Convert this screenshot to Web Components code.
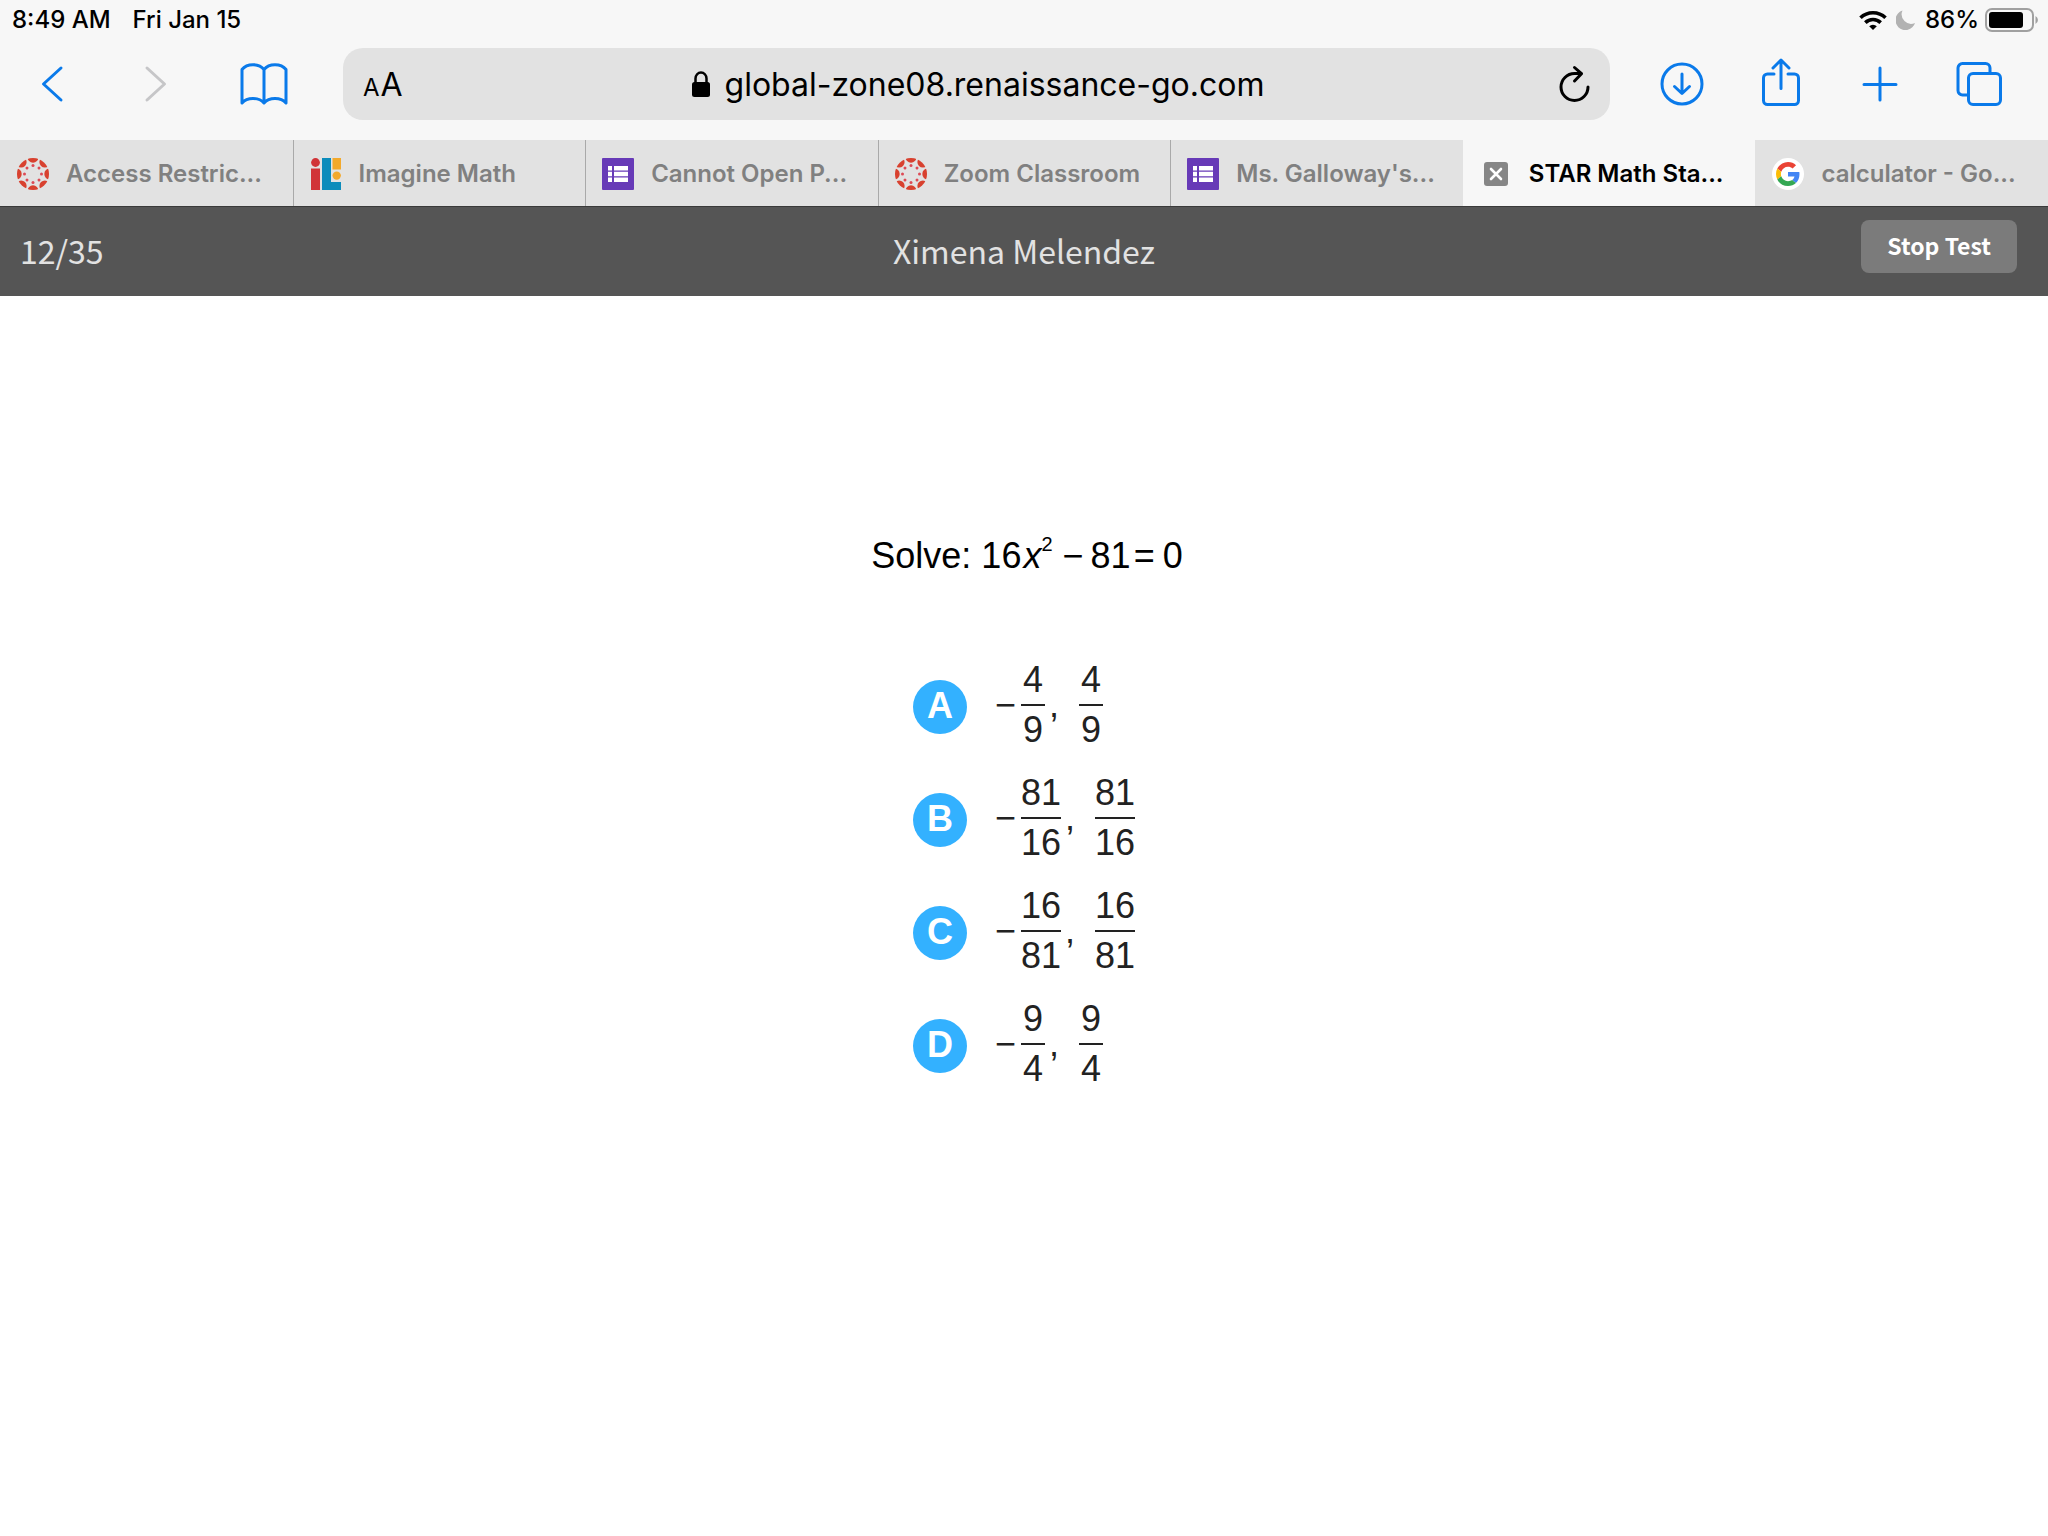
<!DOCTYPE html>
<html lang="en">
<head>
<meta charset="utf-8">
<meta name="viewport" content="width=device-width, initial-scale=1">
<title>STAR Math</title>
<style>
  body {
    margin: 0;
    background: #fff;
    font-family: Inter, "Liberation Sans", sans-serif;
  }
</style>
</head>
<body>
<star-app></star-app>

<script>
const icons = {
  back: `<svg width="24" height="40" viewBox="0 0 24 40" fill="none" stroke="currentColor" stroke-width="3" stroke-linecap="round" stroke-linejoin="round"><path d="M21 4 L3.500 20 L21 36"/></svg>`,
  forward: `<svg width="24" height="40" viewBox="0 0 24 40" fill="none" stroke="currentColor" stroke-width="3" stroke-linecap="round" stroke-linejoin="round"><path d="M3 4 L20.500 20 L3 36"/></svg>`,
  book: `<svg width="48" height="44" viewBox="0 0 48 44" fill="none" stroke="currentColor" stroke-width="3" stroke-linejoin="round"><path d="M24 7.500 C19 1 7 1 2 7.500 V41 C7 35 19 35 24 41 C29 35 41 35 46 41 V7.500 C41 1 29 1 24 7.500 V41"/></svg>`,
  lock: `<svg width="18" height="26" viewBox="0 0 18 26"><rect y="11" width="18" height="15" rx="2.500"/><path d="M3.500 12 V7.500 a5.500 6 0 0 1 11 0 V12" fill="none" stroke="currentColor" stroke-width="2.500"/></svg>`,
  reload: `<svg width="32" height="38" viewBox="0 0 32 38" fill="none" stroke="currentColor" stroke-width="3" stroke-linecap="round" stroke-linejoin="round"><path d="M29 22 A13.500 13.500 0 1 1 15.500 8.500 H22"/><path d="M15.500 2.500 L22.500 8.700 L15.500 16"/></svg>`,
  download: `<svg width="44" height="44" viewBox="0 0 44 44" fill="none" stroke="currentColor" stroke-width="3" stroke-linecap="round" stroke-linejoin="round"><circle cx="22" cy="22" r="20"/><path d="M22 12 V31 M14.500 24.500 L22 31.500 L29.500 24.500"/></svg>`,
  share: `<svg width="40" height="52" viewBox="0 0 40 52" fill="none" stroke="currentColor" stroke-width="3" stroke-linecap="round" stroke-linejoin="round"><path d="M13 16 H6.500 a4 4 0 0 0 -4 4 V42.500 a4 4 0 0 0 4 4 H33.500 a4 4 0 0 0 4 -4 V20 a4 4 0 0 0 -4 -4 H27"/><path d="M20 30.500 V3 M12 10 L20 2 L28 10"/></svg>`,
  plus: `<svg width="36" height="36" viewBox="0 0 36 36" fill="none" stroke="currentColor" stroke-width="3" stroke-linecap="round"><path d="M18 2 V34 M2 18.500 H34"/></svg>`,
  tabs: `<svg width="46" height="44" viewBox="0 0 46 44" fill="none" stroke="currentColor" stroke-width="3" stroke-linejoin="round"><rect x="12.500" y="11.500" width="32" height="31" rx="4.500"/><path d="M12.500 33 H6.500 a4.500 4.500 0 0 1 -4.500 -4.500 V6 a4.500 4.500 0 0 1 4.500 -4.500 H29.500 a4.500 4.500 0 0 1 4.500 4.500 V11"/></svg>`,
  wifi: `<svg width="28" height="20" viewBox="0 0 28 20" fill="none" stroke="currentColor" stroke-width="3.600"><path d="M1.500 7.800 A18 18 0 0 1 26.500 7.800"/><path d="M6.300 12.600 A11 11 0 0 1 21.700 12.600"/><path d="M14 20 L10.200 16.200 A5.400 5.400 0 0 1 17.800 16.200 Z" fill="currentColor" stroke="none"/></svg>`,
  moon: `<svg width="20" height="20" viewBox="0 0 20 20" fill="#b2b2b2"><path d="M6.500 0.500 A10 10 0 1 0 19 13 A9.500 9.500 0 0 1 6.500 0.500 Z"/></svg>`,
  battery: `<svg width="54" height="24" viewBox="0 0 54 24"><rect x="1" y="1" width="47" height="22" rx="6" fill="none" stroke="#a0a0a0" stroke-width="2"/><rect x="4" y="4" width="34" height="16" rx="3"/><path d="M50.500 8 a4.500 4.500 0 0 1 0 8 Z" fill="#a0a0a0"/></svg>`,
  canvas: `<svg width="32" height="32" viewBox="0 0 32 32"><defs><clipPath id="disc"><circle cx="16" cy="16" r="16"/></clipPath></defs><g clip-path="url(#disc)" fill="#d8412f">${
    [0, 45, 90, 135, 180, 225, 270, 315].map(a =>
      `<g transform="rotate(${a} 16 16)"><circle cx="16" cy="-0.800" r="5.500"/><circle cx="16" cy="7.500" r="1.500" fill="#dd4a55"/></g>`).join('')
  }</g></svg>`,
  imagine: `<svg width="32" height="32" viewBox="0 0 32 32"><circle cx="5.500" cy="4.500" r="4.400" fill="#d13438"/><path d="M1 10.500 H10 V32 H1 Z" fill="#d13438"/><path d="M12 0 H21 V24 H31 V32 H12 Z" fill="#0c8cbb"/><path d="M22.500 0 H31 V11.500 H22.500 Z" fill="#f3a92b"/><circle cx="26.700" cy="17.600" r="4.200" fill="#f3a92b"/></svg>`,
  forms: `<svg width="32" height="32" viewBox="0 0 32 32"><rect width="32" height="32" rx="1" fill="#673ab7"/><path d="M6 8h4v4.500H6z M12 8h14v4.500H12z M6 13.800h4v4.400H6z M12 13.800h14v4.400H12z M6 19.500h4V24H6z M12 19.500h14V24H12z" fill="#fff"/></svg>`,
  google: `<svg width="32" height="32" viewBox="0 0 32 32"><circle cx="16" cy="16" r="16" fill="#fff"/><g transform="translate(4 4) scale(0.500)"><path fill="#ea4335" d="M24 9.500c3.540 0 6.710 1.220 9.210 3.600l6.850-6.850C35.900 2.380 30.470 0 24 0 14.620 0 6.510 5.380 2.560 13.220l7.980 6.190C12.430 13.720 17.740 9.500 24 9.500z"/><path fill="#4285f4" d="M46.980 24.550c0-1.570-.15-3.090-.38-4.550H24v9.020h12.940c-.58 2.960-2.260 5.480-4.780 7.180l7.730 6c4.510-4.180 7.090-10.360 7.090-17.650z"/><path fill="#fbbc05" d="M10.530 28.590c-.48-1.450-.76-2.990-.76-4.590s.27-3.140.76-4.590l-7.980-6.190C.92 16.460 0 20.120 0 24c0 3.880.92 7.540 2.560 10.780l7.970-6.190z"/><path fill="#34a853" d="M24 48c6.480 0 11.930-2.130 15.890-5.810l-7.730-6c-2.150 1.450-4.920 2.300-8.160 2.300-6.260 0-11.570-4.220-13.470-9.910l-7.980 6.190C6.510 42.620 14.620 48 24 48z"/></g></svg>`,
  close: `<svg width="24" height="24" viewBox="0 0 24 24"><rect width="24" height="24" rx="3" fill="#868686"/><path d="M7 7 L17 17 M17 7 L7 17" stroke="#fff" stroke-width="2.600" stroke-linecap="round"/></svg>`
}

class IconGlyph extends HTMLElement {
  constructor () {
    super()
    this.attachShadow({ mode: 'open' })
  }

  connectedCallback () {
    this.shadowRoot.innerHTML = `
      <style>
        :host { display: inline-flex; }
        svg { display: block; }
      </style>
      ${icons[this.getAttribute('name')]}`
  }
}
customElements.define('icon-glyph', IconGlyph)

class StatusBar extends HTMLElement {
  constructor () {
    super()
    this.attachShadow({ mode: 'open' })
    this.shadowRoot.innerHTML = `
      <style>
        :host {
          align-items: center;
          display: flex;
          font-size: 24px;
          font-weight: 500;
          height: 40px;
          justify-content: space-between;
          line-height: 28px;
          padding: 0 9px 0 12px;
        }
        div {
          align-items: center;
          display: flex;
        }
        .clock { gap: 22px; }
        .state { gap: 9px; }
        .power { gap: 6px; }
      </style>
      <div class="clock"><slot name="time"></slot><slot name="date"></slot></div>
      <div class="state">
        <icon-glyph name="wifi"></icon-glyph>
        <icon-glyph name="moon"></icon-glyph>
        <div class="power">
          <slot name="battery"></slot>
          <icon-glyph name="battery"></icon-glyph>
        </div>
      </div>`
  }
}
customElements.define('status-bar', StatusBar)

class ToolButton extends HTMLElement {
  constructor () {
    super()
    this.attachShadow({ mode: 'open' })
  }

  connectedCallback () {
    const disabled = this.hasAttribute('disabled') ? 'disabled' : ''
    this.shadowRoot.innerHTML = `
      <style>
        :host { display: block; }
        button {
          align-items: center;
          background: none;
          border: none;
          color: #0a7aea;
          cursor: pointer;
          display: flex;
          height: 64px;
          justify-content: center;
          padding: 0;
          width: 64px;
        }
        button:disabled {
          color: #c6c6c8;
          cursor: default;
        }
      </style>
      <button type="button" aria-label="${this.getAttribute('label')}" ${disabled}>
        <icon-glyph name="${this.getAttribute('icon')}"></icon-glyph>
      </button>`
  }
}
customElements.define('tool-button', ToolButton)

class AddressBar extends HTMLElement {
  constructor () {
    super()
    this.attachShadow({ mode: 'open' })
  }

  connectedCallback () {
    this.shadowRoot.innerHTML = `
      <style>
        :host {
          align-items: center;
          background: #e2e2e2;
          border-radius: 20px;
          box-sizing: border-box;
          display: grid;
          grid-template-columns: 1fr auto 1fr;
          height: 72px;
          padding: 0 19px 0 20px;
        }
        button {
          align-items: baseline;
          background: none;
          border: none;
          color: #000;
          cursor: pointer;
          display: flex;
          font: inherit;
          padding: 0;
        }
        .size {
          font-size: 32px;
          gap: 1px;
          justify-self: start;
        }
        .size small { font-size: 24px; }
        .reload { justify-self: end; }
        .site {
          align-items: center;
          display: flex;
          gap: 15px;
          padding-left: 2px;
        }
        input {
          background: none;
          border: none;
          color: #000;
          field-sizing: content;
          font-family: inherit;
          font-size: 32px;
          line-height: 40px;
          outline: none;
          padding: 2px 0 0;
        }
      </style>
      <button type="button" class="size" aria-label="Page settings"><small>A</small><span>A</span></button>
      <label class="site">
        <icon-glyph name="lock"></icon-glyph>
        <input type="text" aria-label="Address" value="${this.getAttribute('url')}">
      </label>
      <button type="button" class="reload" aria-label="Reload"><icon-glyph name="reload"></icon-glyph></button>`
  }
}
customElements.define('address-bar', AddressBar)

class BrowserToolbar extends HTMLElement {
  constructor () {
    super()
    this.attachShadow({ mode: 'open' })
    this.shadowRoot.innerHTML = `
      <style>
        :host {
          align-items: center;
          display: flex;
          gap: 40px;
          padding: 8px 37px 20px 20px;
        }
        div { display: flex; }
        .left {
          gap: 44px;
          padding-right: 7px;
        }
        .history { gap: 40px; }
        .right { gap: 35px; }
        address-bar { flex: 1; }
      </style>
      <div class="left">
        <div class="history">
          <tool-button icon="back" label="Back"></tool-button>
          <tool-button icon="forward" label="Forward" disabled></tool-button>
        </div>
        <tool-button icon="book" label="Bookmarks"></tool-button>
      </div>
      <address-bar url="global-zone08.renaissance-go.com"></address-bar>
      <div class="right">
        <tool-button icon="download" label="Downloads"></tool-button>
        <tool-button icon="share" label="Share"></tool-button>
        <tool-button icon="plus" label="New tab"></tool-button>
        <tool-button icon="tabs" label="Show tabs"></tool-button>
      </div>`
  }
}
customElements.define('browser-toolbar', BrowserToolbar)

class BrowserTab extends HTMLElement {
  constructor () {
    super()
    this.attachShadow({ mode: 'open' })
  }

  connectedCallback () {
    this.shadowRoot.innerHTML = `
      <style>
        :host {
          background: #e2e2e2;
          border-left: 1px solid #a9a9a9;
          box-sizing: border-box;
          color: #808080;
          display: block;
          min-width: 0;
        }
        :host([plain]) { border-left-color: #e2e2e2; }
        :host([active]) {
          background: #f7f7f7;
          border-left-color: #f7f7f7;
          color: #000;
        }
        a {
          align-items: center;
          color: inherit;
          display: flex;
          font-size: 24px;
          font-weight: 600;
          gap: 17px;
          height: 64px;
          line-height: 28px;
          padding: 2px 0 0 16px;
          text-decoration: none;
          white-space: nowrap;
        }
        icon-glyph {
          flex: none;
          justify-content: center;
          width: 32px;
        }
      </style>
      <a href="#"><icon-glyph name="${this.getAttribute('icon')}"></icon-glyph><slot></slot></a>`
  }
}
customElements.define('browser-tab', BrowserTab)

class TabStrip extends HTMLElement {
  constructor () {
    super()
    this.attachShadow({ mode: 'open' })
    this.shadowRoot.innerHTML = `
      <style>
        :host {
          border-bottom: 1px solid #3a3a3a;
          display: grid;
          grid-auto-columns: 1fr;
          grid-auto-flow: column;
        }
      </style>
      <slot></slot>`
  }
}
customElements.define('tab-strip', TabStrip)

class TestHeader extends HTMLElement {
  constructor () {
    super()
    this.attachShadow({ mode: 'open' })
    this.shadowRoot.innerHTML = `
      <style>
        :host {
          align-items: start;
          background: #555;
          color: #e2e2e2;
          display: grid;
          font-family: "Noto Sans CJK SC", "Noto Sans", sans-serif;
          font-size: 32px;
          font-weight: 400;
          grid-template-columns: 1fr auto 1fr;
          line-height: 60px;
          padding: 13px 20px 16px;
        }
        button {
          background: #7b7b7b;
          border: none;
          border-radius: 8px;
          color: #fff;
          cursor: pointer;
          font-family: inherit;
          font-size: 23px;
          font-weight: 700;
          height: 53px;
          justify-self: end;
          line-height: 32px;
          margin-right: 11px;
          padding: 0 26px 3px;
        }
      </style>
      <slot name="progress"></slot>
      <slot name="student"></slot>
      <button type="button">Stop Test</button>`
  }
}
customElements.define('test-header', TestHeader)

class MathFraction extends HTMLElement {
  constructor () {
    super()
    this.attachShadow({ mode: 'open' })
  }

  connectedCallback () {
    this.shadowRoot.innerHTML = `
      <style>
        :host {
          display: flex;
          flex-direction: column;
          line-height: 48px;
          min-width: 24px;
          text-align: center;
        }
        .top { border-bottom: 2px solid #222; }
      </style>
      <span class="top">${this.getAttribute('top')}</span>
      <span>${this.getAttribute('bottom')}</span>`
  }
}
customElements.define('math-fraction', MathFraction)

// One choice: the negative and the positive root of the same fraction
class AnswerChoice extends HTMLElement {
  constructor () {
    super()
    this.attachShadow({ mode: 'open' })
  }

  connectedCallback () {
    const top = this.getAttribute('top')
    const bottom = this.getAttribute('bottom')
    this.shadowRoot.innerHTML = `
      <style>
        :host { display: block; }
        button {
          align-items: center;
          background: none;
          border: none;
          color: #222;
          cursor: pointer;
          display: flex;
          font-family: "Liberation Sans", Arial, sans-serif;
          font-size: 36px;
          height: 113px;
          padding: 0;
        }
        .letter {
          background: #33b1ff;
          border-radius: 50%;
          color: #fff;
          font-weight: 700;
          height: 54px;
          line-height: 51px;
          margin-right: 28px;
          width: 54px;
        }
        .value {
          align-items: center;
          display: flex;
          padding-bottom: 4px;
        }
        .minus { margin-right: 5px; }
        .comma { margin: 0 20px 0 4px; }
      </style>
      <button type="button">
        <span class="letter">${this.getAttribute('letter')}</span>
        <span class="value">
          <span class="minus">&minus;</span>
          <math-fraction top="${top}" bottom="${bottom}"></math-fraction>
          <span class="comma">,</span>
          <math-fraction top="${top}" bottom="${bottom}"></math-fraction>
        </span>
      </button>`
  }
}
customElements.define('answer-choice', AnswerChoice)

class TestQuestion extends HTMLElement {
  constructor () {
    super()
    this.attachShadow({ mode: 'open' })
    this.shadowRoot.innerHTML = `
      <style>
        :host {
          align-items: center;
          color: #000;
          display: flex;
          flex-direction: column;
          font-family: "Liberation Sans", Arial, sans-serif;
          font-size: 36px;
          gap: 74px;
          padding: 240px 20px 40px;
        }
        p {
          line-height: 40px;
          margin: 0;
          padding-left: 6px;
        }
        i { margin-left: 2px; }
        sup {
          font-size: 20px;
          line-height: 1;
          position: relative;
          top: -17px;
          vertical-align: baseline;
        }
        .minus { margin: 0 7px 0 10px; }
        .equals { margin: 0 8px 0 3px; }
      </style>
      <p>Solve: 16<i>x</i><sup>2</sup><span class="minus">&minus;</span>81<span class="equals">=</span>0</p>
      <div class="answers"><slot></slot></div>`
  }
}
customElements.define('test-question', TestQuestion)

class StarApp extends HTMLElement {
  constructor () {
    super()
    this.attachShadow({ mode: 'open' })
    this.shadowRoot.innerHTML = `
      <style>
        :host { display: block; }
        .browser { background: #f7f7f7; }
      </style>
      <div class="browser">
        <status-bar>
          <span slot="time">8:49 AM</span>
          <span slot="date">Fri Jan 15</span>
          <span slot="battery">86%</span>
        </status-bar>
        <browser-toolbar></browser-toolbar>
        <tab-strip>
          <browser-tab icon="canvas" plain>Access Restric...</browser-tab>
          <browser-tab icon="imagine">Imagine Math</browser-tab>
          <browser-tab icon="forms">Cannot Open P...</browser-tab>
          <browser-tab icon="canvas">Zoom Classroom</browser-tab>
          <browser-tab icon="forms">Ms. Galloway's...</browser-tab>
          <browser-tab icon="close" active>STAR Math Sta...</browser-tab>
          <browser-tab icon="google" plain>calculator - Go...</browser-tab>
        </tab-strip>
      </div>
      <test-header>
        <span slot="progress">12/35</span>
        <span slot="student">Ximena Melendez</span>
      </test-header>
      <test-question>
        <answer-choice letter="A" top="4" bottom="9"></answer-choice>
        <answer-choice letter="B" top="81" bottom="16"></answer-choice>
        <answer-choice letter="C" top="16" bottom="81"></answer-choice>
        <answer-choice letter="D" top="9" bottom="4"></answer-choice>
      </test-question>`
  }
}
customElements.define('star-app', StarApp)
</script>
</body>
</html>
